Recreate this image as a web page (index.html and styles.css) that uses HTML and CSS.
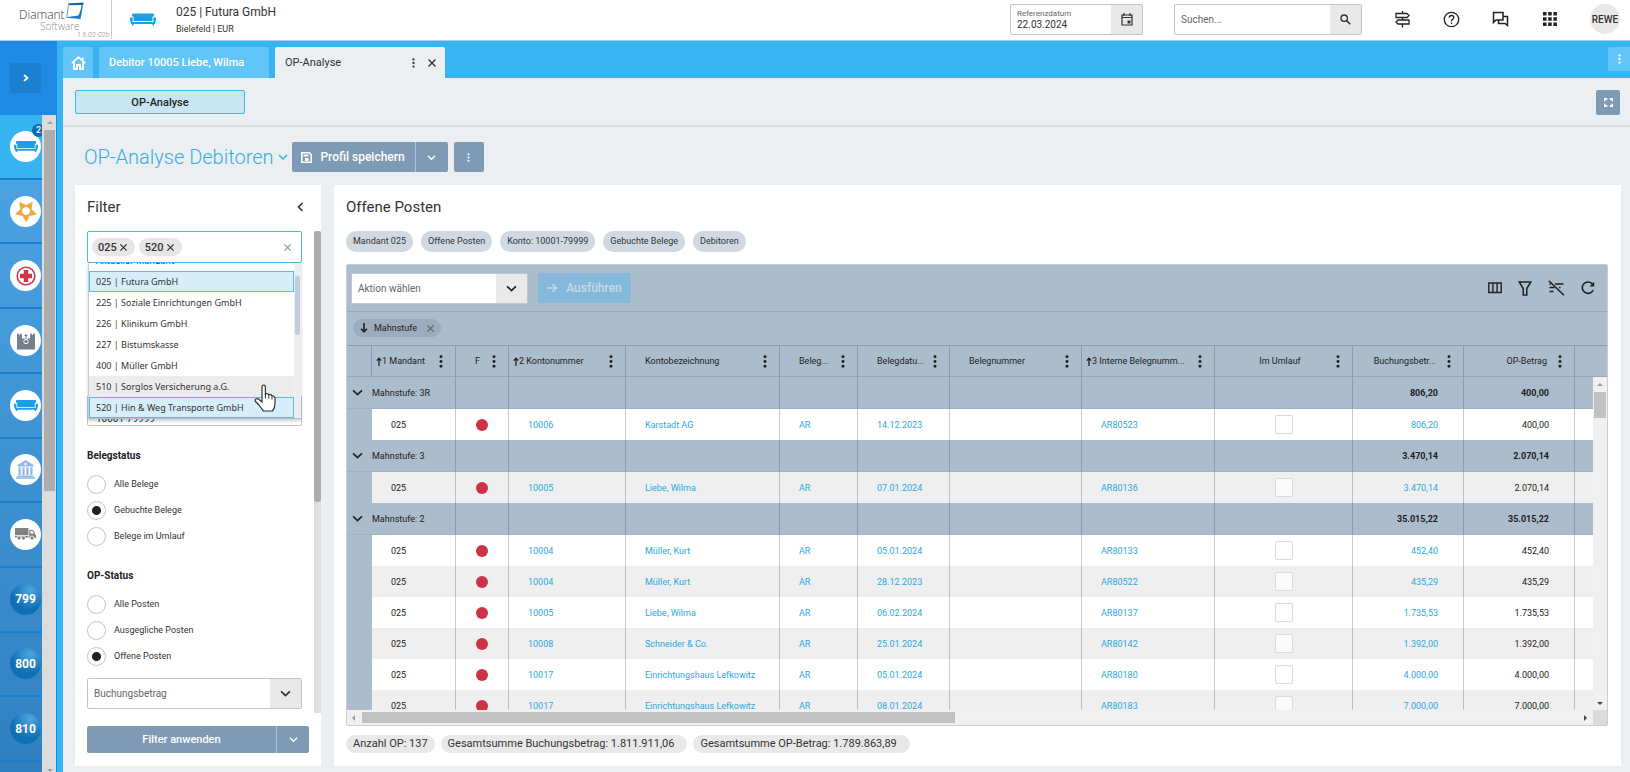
FILE: index.html
```html
<!DOCTYPE html>
<html lang="de">
<head>
<meta charset="utf-8">
<title>OP-Analyse Debitoren</title>
<link rel="stylesheet" href="styles.css">
</head>
<body>
<svg class="defs" aria-hidden="true">
  <symbol id="sofa" viewBox="0 0 26 13"><path d="M3 0.500H23Q24 .5 24 2V3.500H22.500V8H3.500V3.500H2V2Q2 .5 3 .5Z"/><path d="M0 4.500H2.600V9H23.400V4.500H26V7L24.800 11H24V12.500H22.500V11H3.500V12.500H2V11H1.200L0 7Z"/></symbol>
  <symbol id="dots" viewBox="0 0 6 14"><circle cx="3" cy="2" r="1.600"/><circle cx="3" cy="7" r="1.600"/><circle cx="3" cy="12" r="1.600"/></symbol>
  <symbol id="down" viewBox="0 0 10 10"><path d="M1 3L5 7L9 3" fill="none" stroke="currentColor" stroke-width="1.500"/></symbol>
  <symbol id="x" viewBox="0 0 10 10"><path d="M1.500 1.500L8.500 8.500M8.500 1.500L1.500 8.500" fill="none" stroke="currentColor" stroke-width="1.400"/></symbol>
  <symbol id="up" viewBox="0 0 6 9"><path d="M3 9V1.500M.8 3.600L3 1.200L5.200 3.600" fill="none" stroke="currentColor" stroke-width="1.300"/></symbol>
</svg>

<header class="top">
  <div class="logo">
    <svg width="111" height="40" role="img" aria-label="Diamant Software">
      <text x="19" y="20" class="logo-a">Diamant</text>
      <text x="40" y="31" class="logo-b">Software</text>
      <path d="M68.500 5L82 4.500L80.500 17L66.800 18.500Z" fill="#fff" stroke="#5ba3d8" stroke-width="1"/>
      <path d="M83.500 3.500L80.500 20L66 18.800L78.500 16.500Z" fill="#1c79c4"/>
      <path d="M68 4.500L83.500 3.500L83 6L70 6.200Z" fill="#1565a9"/>
      <text x="77" y="38" class="logo-c">1.6.02-02b</text>
    </svg>
  </div>
  <svg class="firm-icon"><use href="#sofa"/></svg>
  <div class="firm">
    <div class="firm-name">025 | Futura GmbH</div>
    <div class="firm-place">Bielefeld | EUR</div>
  </div>
  <div class="box date-box">
    <div class="date-text"><label for="ref">Referenzdatum</label><input id="ref" value="22.03.2024"></div>
    <button class="box-btn" aria-label="Kalender"><svg width="12" height="13" viewBox="0 0 12 13"><path d="M1 2H11V12H1ZM1 4.500H11M3 0V3M9 0V3" fill="none" stroke="currentColor" stroke-width="1.200"/><path d="M6.500 7.500H9.500V10.500H6.500Z"/></svg></button>
  </div>
  <div class="box search-box">
    <input class="field-text" placeholder="Suchen..." aria-label="Suchen">
    <button class="box-btn" aria-label="Suche starten"><svg width="11" height="11" viewBox="0 0 11 11"><circle cx="4.200" cy="4.200" r="3.200" fill="none" stroke="currentColor" stroke-width="1.300"/><path d="M6.500 6.500L10.200 10.200" stroke="currentColor" stroke-width="1.600"/></svg></button>
  </div>
  <nav class="tools">
    <button aria-label="Wegweiser"><svg width="17" height="17" viewBox="0 0 17 17" fill="none" stroke="currentColor" stroke-width="1.300"><path d="M2 2.500H13L15 4.500L13 6.500H2ZM15 9H4L2 11L4 13H15ZM8.500 0V2.500M8.500 6.500V9M8.500 13V16.500"/></svg></button>
    <button aria-label="Hilfe"><svg width="17" height="17" viewBox="0 0 17 17" fill="none" stroke="currentColor" stroke-width="1.300"><circle cx="8.500" cy="8.500" r="7.200"/><path d="M6.200 6.800Q6.300 4.500 8.500 4.500T10.800 6.600Q10.800 7.600 9.600 8.400T8.500 10.200M8.500 11.500V13"/></svg></button>
    <button aria-label="Nachrichten"><svg width="17" height="17" viewBox="0 0 17 17" fill="none" stroke="currentColor" stroke-width="1.500"><path d="M1.500 11.500V1.500H11V9H4ZM11 5.500H15.500V14.500L13 12.500H6.500V9"/></svg></button>
    <button aria-label="Apps"><svg width="14" height="14" viewBox="0 0 14 14"><path d="M0 0h3.500v3.500H0zM5.200 0h3.500v3.500H5.200zM10.400 0h3.500v3.500h-3.500zM0 5.200h3.500v3.500H0zM5.200 5.200h3.500v3.500H5.200zM10.400 5.200h3.500v3.500h-3.500zM0 10.400h3.500v3.500H0zM5.200 10.400h3.500v3.500H5.200zM10.400 10.400h3.500v3.500h-3.500z"/></svg></button>
  </nav>
  <button class="avatar">REWE</button>
</header>

<div class="frame">
  <aside class="rail">
    <div class="rail-top"><button class="expand" aria-label="Ausklappen"><svg width="6" height="8" viewBox="0 0 6 8"><path d="M1 1L4.500 4L1 7" fill="none" stroke="currentColor" stroke-width="1.700"/></svg></button></div>
    <div class="rail-body">
      <div class="rail-list">
        <a href="#" class="item active"><span class="disc sofa"><svg width="24" height="13"><use href="#sofa"/></svg></span><span class="badge">2</span></a>
        <a href="#" class="item"><span class="disc"><svg width="26" height="26" viewBox="0 0 26 26" fill="#f2a737"><g id="ray"><path d="M13 24.500L10.800 20L11 17H15L15.200 20Z"/><path d="M8.800 15.500L12 17H14L17.200 15.500L15.200 20.500H10.800Z"/></g><use href="#ray" transform="rotate(72 13 13)"/><use href="#ray" transform="rotate(144 13 13)"/><use href="#ray" transform="rotate(216 13 13)"/><use href="#ray" transform="rotate(288 13 13)"/></svg></span></a>
        <a href="#" class="item"><span class="disc"><svg width="20" height="20" viewBox="0 0 20 20"><circle cx="10" cy="10" r="8.800" fill="none" stroke="#cf3447" stroke-width="1.600"/><path d="M7.800 4H12.200V7.800H16V12.200H12.200V16H7.800V12.200H4V7.800H7.800Z" fill="#cf3447"/></svg></span></a>
        <a href="#" class="item"><span class="disc"><svg width="18" height="19" viewBox="0 0 18 19"><path d="M0 18.500V4L1 1.500L2 4H3L4 1.500L5 4V7.500H13V4L14 1.500L15 4H16L17 1.500L18 4V18.500Z" fill="#75808c"/><circle cx="9" cy="10.500" r="2.200" fill="#75808c" stroke="#fff" stroke-width="1"/><path d="M9 3V7M7.500 4.500H10.500" stroke="#75808c"/></svg></span></a>
        <a href="#" class="item"><span class="disc sofa"><svg width="24" height="13"><use href="#sofa"/></svg></span></a>
        <a href="#" class="item"><span class="disc"><svg width="19" height="19" viewBox="0 0 19 19" fill="#8fb9e6"><path fill-rule="evenodd" d="M9.500 0L17.500 5V6.500H1.500V5ZM9.500 2.800A1.200 1.200 0 1 0 9.500 5.200A1.200 1.200 0 1 0 9.500 2.800Z"/><path d="M2.500 7.300H4.700V15H2.500ZM6.400 7.300H8.600V15H6.400ZM10.400 7.300H12.600V15H10.400ZM14.300 7.300H16.500V15H14.300ZM1.500 15.600H17.500V17H1.500ZM0 17.300H19V18.800H0Z"/></svg></span></a>
        <a href="#" class="item"><span class="disc"><svg width="21" height="13" viewBox="0 0 21 13" fill="#808080"><path d="M0 0H13.500V7H0ZM0 7.800H13.500V9.500H0ZM14.300 2H18L20 5V6L21 7V10H14.300Z"/><path d="M15.500 3H17.500L18.800 5.500H15.500Z" fill="#fff"/><g stroke="#fff" stroke-width=".8"><circle cx="4" cy="10" r="2"/><circle cx="8.500" cy="10" r="2"/><circle cx="17" cy="10" r="2"/></g></svg></span></a>
        <a href="#" class="item"><span class="disc num">799</span></a>
        <a href="#" class="item"><span class="disc num">800</span></a>
        <a href="#" class="item"><span class="disc num">810</span></a>
        <div class="item-rest"></div>
      </div>
      <div class="rail-scroll"><i class="tri up"></i><div class="rail-thumb"></div><i class="tri down pale"></i></div>
    </div>
  </aside>

  <main class="work">
    <div class="tabs">
      <button class="tab home" aria-label="Startseite"><svg width="15" height="14" viewBox="0 0 15 14" fill="none" stroke="currentColor" stroke-width="1.800"><path d="M.8 7.200L7.500 1.200L14.200 7.200M3 6V13H6V9H9V13H12V6M11.800 1.500V4"/></svg></button>
      <button class="tab wide">Debitor 10005 Liebe, Wilma</button>
      <div class="tab current"><a href="#">OP-Analyse</a><button aria-label="Optionen"><svg width="5" height="10"><use href="#dots"/></svg></button><button aria-label="Schließen"><svg width="10" height="10"><use href="#x"/></svg></button></div>
      <button class="tab more" aria-label="Weitere Tabs"><svg width="5" height="10"><use href="#dots"/></svg></button>
    </div>
    <div class="subnav">
      <button class="sub">OP-Analyse</button>
      <button class="full" aria-label="Vollbild"><svg width="9" height="9" viewBox="0 0 9 9" fill="none" stroke="currentColor" stroke-width="1.700"><path d="M.8 3.300V.8H3.300M5.700 .8H8.200V3.300M8.200 5.700V8.200H5.700M3.300 8.200H.8V5.700"/></svg></button>
    </div>
    <div class="title-row">
      <h1>OP-Analyse Debitoren</h1>
      <button class="title-arrow" aria-label="Profil wählen"><svg width="10" height="10"><use href="#down"/></svg></button>
      <button class="btn save"><svg width="11" height="11" viewBox="0 0 11 11"><path d="M.8 .8H8.200L10.200 2.800V10.200H.8Z" fill="none" stroke="currentColor" stroke-width="1.500"/><path d="M2.500 2.500H7.500V4.500H2.500ZM4 6H7.500V9H4Z"/></svg>Profil speichern</button>
      <button class="btn split" aria-label="Mehr"><svg width="9" height="9"><use href="#down"/></svg></button>
      <button class="btn kebab" aria-label="Optionen"><svg width="5" height="9"><use href="#dots"/></svg></button>
    </div>

    <div class="panels">
      <section class="panel filter">
        <div class="filter-head"><h2>Filter</h2><button aria-label="Einklappen"><svg width="7" height="10" viewBox="0 0 7 10"><path d="M5.500 1L1.500 5L5.500 9" fill="none" stroke="currentColor" stroke-width="1.600"/></svg></button></div>
        <div class="filter-body">
          <div class="fields">
            <div class="multi">
              <span class="tag">025<button aria-label="025 entfernen"><svg width="9" height="9"><use href="#x"/></svg></button></span>
              <span class="tag">520<button aria-label="520 entfernen"><svg width="9" height="9"><use href="#x"/></svg></button></span>
              <input aria-label="Mandant">
              <button class="clear" aria-label="Leeren"><svg width="9" height="9"><use href="#x"/></svg></button>
              <div class="drop">
                <ul role="listbox" aria-label="Mandanten">
                  <li role="option">Aktueller Mandant</li>
                  <li role="option" class="sel">025 | Futura GmbH</li>
                  <li role="option">225 | Soziale Einrichtungen GmbH</li>
                  <li role="option">226 | Klinikum GmbH</li>
                  <li role="option">227 | Bistumskasse</li>
                  <li role="option">400 | Müller GmbH</li>
                  <li role="option" class="hover">510 | Sorglos Versicherung a.G.</li>
                  <li role="option" class="sel">520 | Hin &amp; Weg Transporte GmbH</li>
                </ul>
                <div class="drop-scroll"><div></div></div>
              </div>
              <svg class="hand" width="22" height="29" viewBox="0 0 22 29"><path d="M8 16V3.200Q8 1 9.700 1T11.400 3.200V10Q13.800 8.800 14.800 10.800Q17 9.800 18 12Q20.500 11.500 21 14.500V19Q21 24 18.500 27H9.500Q7 24 5 21L1.500 17.500Q.5 16 2 15T5 15.500L8 18Z" fill="#fff" stroke="#333" stroke-width="1.200"/><path d="M11.400 10V14.500M14.800 11V14.500M18 12.500V15.500" stroke="#333" stroke-width="1"/></svg>
            </div>
            <input class="range" value="10001-79999" aria-label="Konto">
            <h3>Belegstatus</h3>
            <label class="radio"><input type="radio" name="beleg">Alle Belege</label>
            <label class="radio"><input type="radio" name="beleg" checked>Gebuchte Belege</label>
            <label class="radio"><input type="radio" name="beleg">Belege im Umlauf</label>
            <h3>OP-Status</h3>
            <label class="radio"><input type="radio" name="op">Alle Posten</label>
            <label class="radio"><input type="radio" name="op">Ausgegliche Posten</label>
            <label class="radio"><input type="radio" name="op" checked>Offene Posten</label>
            <div class="box select amount"><select aria-label="Buchungsbetrag"><option>Buchungsbetrag</option></select><span class="box-btn"><svg width="11" height="11"><use href="#down"/></svg></span></div>
          </div>
          <div class="filter-scroll"><div></div></div>
        </div>
        <div class="apply"><button class="btn go">Filter anwenden</button><button class="btn split" aria-label="Mehr"><svg width="9" height="9"><use href="#down"/></svg></button></div>
      </section>

      <section class="panel posts">
        <h2>Offene Posten</h2>
        <div class="chips"><span>Mandant 025</span><span>Offene Posten</span><span>Konto: 10001-79999</span><span>Gebuchte Belege</span><span>Debitoren</span></div>
        <div class="grid">
          <div class="bar">
            <div class="box select action"><select aria-label="Aktion wählen"><option>Aktion wählen</option></select><span class="box-btn"><svg width="11" height="11"><use href="#down"/></svg></span></div>
            <button class="run" disabled><svg width="11" height="10" viewBox="0 0 11 10"><path d="M0 5H9.500M5.500 1L9.500 5L5.500 9" fill="none" stroke="currentColor" stroke-width="1.500"/></svg>Ausführen</button>
            <div class="bar-icons">
              <button aria-label="Spalten"><svg width="14" height="12" viewBox="0 0 14 12" fill="none" stroke="currentColor" stroke-width="1.400"><path d="M.8 1H13.200V10.500H.8ZM4.900 1V10.500M9.100 1V10.500"/></svg></button>
              <button aria-label="Filter"><svg width="14" height="15" viewBox="0 0 14 15" fill="none" stroke="currentColor" stroke-width="1.500"><path d="M1.200 1H12.800L8.800 7.500V14H5.200V7.500Z"/></svg></button>
              <button aria-label="Filter löschen"><svg width="17" height="16" viewBox="0 0 17 16" fill="none" stroke="currentColor" stroke-width="1.500"><path d="M.8 .8L16 15.200M7 4H15.500M1.500 4H3M1.500 7.500H6.500M11 7.500H12.500M1.500 11.500H5.500"/></svg></button>
              <button aria-label="Aktualisieren"><svg width="14" height="14" viewBox="0 0 14 14" fill="none" stroke="currentColor" stroke-width="1.600"><path d="M12.200 9A5.700 5.700 0 1 1 11.500 3.200"/><path d="M13.200 .8V5.600H8.600Z" fill="currentColor" stroke="none"/></svg></button>
            </div>
          </div>
          <div class="group-bar"><span class="group-chip"><svg width="8" height="10" viewBox="0 0 8 10"><path d="M4 0V8.500M1 5.800L4 8.800L7 5.800" fill="none" stroke="currentColor" stroke-width="1.600"/></svg>Mahnstufe<button aria-label="Gruppierung entfernen"><svg width="9" height="9"><use href="#x"/></svg></button></span></div>
          <div class="table-area">
            <table>
              <colgroup><col class="c0"><col class="c1"><col class="c2"><col class="c3"><col class="c4"><col class="c5"><col class="c6"><col class="c7"><col class="c8"><col class="c9"><col class="c10"><col class="c11"><col></colgroup>
              <thead><tr>
                <th></th>
                <th><div class="th sorted"><svg><use href="#up"/></svg><span>1 Mandant</span><button aria-label="Menü"><svg><use href="#dots"/></svg></button></div></th>
                <th><div class="th"><span>F</span><button aria-label="Menü"><svg><use href="#dots"/></svg></button></div></th>
                <th><div class="th sorted"><svg><use href="#up"/></svg><span>2 Kontonummer</span><button aria-label="Menü"><svg><use href="#dots"/></svg></button></div></th>
                <th><div class="th"><span>Kontobezeichnung</span><button aria-label="Menü"><svg><use href="#dots"/></svg></button></div></th>
                <th><div class="th"><span>Beleg...</span><button aria-label="Menü"><svg><use href="#dots"/></svg></button></div></th>
                <th><div class="th"><span>Belegdatu...</span><button aria-label="Menü"><svg><use href="#dots"/></svg></button></div></th>
                <th><div class="th"><span>Belegnummer</span><button aria-label="Menü"><svg><use href="#dots"/></svg></button></div></th>
                <th><div class="th sorted"><svg><use href="#up"/></svg><span>3 Interne Belegnumm...</span><button aria-label="Menü"><svg><use href="#dots"/></svg></button></div></th>
                <th><div class="th mid"><span>Im Umlauf</span><button aria-label="Menü"><svg><use href="#dots"/></svg></button></div></th>
                <th><div class="th end"><span>Buchungsbetr...</span><button aria-label="Menü"><svg><use href="#dots"/></svg></button></div></th>
                <th><div class="th end"><span>OP-Betrag</span><button aria-label="Menü"><svg><use href="#dots"/></svg></button></div></th>
                <th></th>
              </tr></thead>
              <tbody>
                <tr class="grp"><td><svg><use href="#down"/></svg></td><td>Mahnstufe: 3R</td><td></td><td></td><td></td><td></td><td></td><td></td><td></td><td></td><td>806,20</td><td>400,00</td><td></td></tr>
                <tr><td></td><td>025</td><td><i class="dot"></i></td><td><a href="#">10006</a></td><td><a href="#">Karstadt AG</a></td><td><a href="#">AR</a></td><td><a href="#">14.12.2023</a></td><td></td><td><a href="#">AR80523</a></td><td><input type="checkbox" aria-label="Im Umlauf"></td><td><a href="#">806,20</a></td><td>400,00</td><td></td></tr>
                <tr class="grp"><td><svg><use href="#down"/></svg></td><td>Mahnstufe: 3</td><td></td><td></td><td></td><td></td><td></td><td></td><td></td><td></td><td>3.470,14</td><td>2.070,14</td><td></td></tr>
                <tr class="alt"><td></td><td>025</td><td><i class="dot"></i></td><td><a href="#">10005</a></td><td><a href="#">Liebe, Wilma</a></td><td><a href="#">AR</a></td><td><a href="#">07.01.2024</a></td><td></td><td><a href="#">AR80136</a></td><td><input type="checkbox" aria-label="Im Umlauf"></td><td><a href="#">3.470,14</a></td><td>2.070,14</td><td></td></tr>
                <tr class="grp"><td><svg><use href="#down"/></svg></td><td>Mahnstufe: 2</td><td></td><td></td><td></td><td></td><td></td><td></td><td></td><td></td><td>35.015,22</td><td>35.015,22</td><td></td></tr>
                <tr><td></td><td>025</td><td><i class="dot"></i></td><td><a href="#">10004</a></td><td><a href="#">Müller, Kurt</a></td><td><a href="#">AR</a></td><td><a href="#">05.01.2024</a></td><td></td><td><a href="#">AR80133</a></td><td><input type="checkbox" aria-label="Im Umlauf"></td><td><a href="#">452,40</a></td><td>452,40</td><td></td></tr>
                <tr class="alt"><td></td><td>025</td><td><i class="dot"></i></td><td><a href="#">10004</a></td><td><a href="#">Müller, Kurt</a></td><td><a href="#">AR</a></td><td><a href="#">28.12.2023</a></td><td></td><td><a href="#">AR80522</a></td><td><input type="checkbox" aria-label="Im Umlauf"></td><td><a href="#">435,29</a></td><td>435,29</td><td></td></tr>
                <tr><td></td><td>025</td><td><i class="dot"></i></td><td><a href="#">10005</a></td><td><a href="#">Liebe, Wilma</a></td><td><a href="#">AR</a></td><td><a href="#">06.02.2024</a></td><td></td><td><a href="#">AR80137</a></td><td><input type="checkbox" aria-label="Im Umlauf"></td><td><a href="#">1.735,53</a></td><td>1.735,53</td><td></td></tr>
                <tr class="alt"><td></td><td>025</td><td><i class="dot"></i></td><td><a href="#">10008</a></td><td><a href="#">Schneider &amp; Co.</a></td><td><a href="#">AR</a></td><td><a href="#">25.01.2024</a></td><td></td><td><a href="#">AR80142</a></td><td><input type="checkbox" aria-label="Im Umlauf"></td><td><a href="#">1.392,00</a></td><td>1.392,00</td><td></td></tr>
                <tr><td></td><td>025</td><td><i class="dot"></i></td><td><a href="#">10017</a></td><td><a href="#">Einrichtungshaus Lefkowitz</a></td><td><a href="#">AR</a></td><td><a href="#">05.01.2024</a></td><td></td><td><a href="#">AR80180</a></td><td><input type="checkbox" aria-label="Im Umlauf"></td><td><a href="#">4.000,00</a></td><td>4.000,00</td><td></td></tr>
                <tr class="alt"><td></td><td>025</td><td><i class="dot"></i></td><td><a href="#">10017</a></td><td><a href="#">Einrichtungshaus Lefkowitz</a></td><td><a href="#">AR</a></td><td><a href="#">08.01.2024</a></td><td></td><td><a href="#">AR80183</a></td><td><input type="checkbox" aria-label="Im Umlauf"></td><td><a href="#">7.000,00</a></td><td>7.000,00</td><td></td></tr>
              </tbody>
            </table>
            <div class="vscroll"><i class="tri up"></i><div></div><i class="tri down"></i></div>
          </div>
          <div class="hscroll"><i class="tri left"></i><div class="track"><div></div></div><i class="tri right"></i><span></span></div>
        </div>
        <div class="sums"><span>Anzahl OP: 137</span><span class="long">Gesamtsumme Buchungsbetrag: 1.811.911,06</span><span class="long">Gesamtsumme OP-Betrag: 1.789.863,89</span></div>
      </section>
    </div>
  </main>
</div>
</body>
</html>
```
FILE: styles.css
```css
* { box-sizing: border-box; }
body { margin: 0; height: 100vh; display: flex; flex-direction: column; overflow: hidden; background: #ebeff2; color: #333; font-family: Roboto, "Liberation Sans", sans-serif; font-size: 9px; }
button, input, select { font: inherit; color: inherit; border: 0; padding: 0; margin: 0; background: none; border-radius: 0; }
button { display: flex; align-items: center; justify-content: center; flex: none; }
input { min-width: 0; }
a { color: inherit; text-decoration: none; }
svg { display: block; flex: none; }
svg:not([fill]) { fill: currentColor; }
h1, h2, h3 { margin: 0; font-weight: 400; }
.defs { position: absolute; width: 0; height: 0; }

/* header */
.top { display: flex; flex: none; align-items: center; height: 41px; padding: 0 10px 2px 0; background: #fff; border-bottom: 1px solid #9fd3f0; }
.logo { width: 112px; height: 40px; border-right: 1px solid #ccc; }
.logo-a { font: 300 12px "Open Sans", sans-serif; fill: #333; }
.logo-b { font: 300 10px "Open Sans", sans-serif; fill: #888; }
.logo-c { font: 300 7px Roboto, sans-serif; fill: #888; }
.firm-icon { width: 26px; height: 13px; margin: 0 20px 0 18px; color: #1ba0e8; }
.firm { flex: 1; padding-top: 2px; }
.firm-name { font-size: 12px; line-height: 18px; }
.firm-place { font-size: 9px; line-height: 16px; }
.box { display: flex; height: 31px; background: #fff; border: 1px solid #c4c4c4; border-radius: 2px; }
.box-btn { display: flex; align-items: center; justify-content: center; width: 31px; background: #e9e9e9; }
.date-box { width: 133px; margin-right: 31px; }
.date-text { flex: 1; display: flex; flex-direction: column; padding: 4px 0 0 6px; }
.date-text label { font-size: 8px; line-height: 10px; color: #666; }
.date-text input { width: 90px; font-size: 10px; line-height: 12px; }
.search-box { width: 188px; }
.field-text { flex: 1; padding-left: 6px; font-size: 10px; }
::placeholder { color: #666; }
.tools { display: flex; padding: 0 16px; color: #222; }
.tools button { width: 49px; }
.avatar { width: 30px; height: 30px; border-radius: 50%; background: #e9e9e9; font-size: 10px; font-weight: 500; }

/* left rail */
.frame { flex: 1; display: flex; min-height: 0; }
.rail { width: 57px; display: flex; flex-direction: column; background: #1e8ae4; }
.rail-top { height: 74px; padding: 22px 10px; }
.expand { width: 31px; height: 30px; background: #1b80d2; color: #fff; border-radius: 2px; }
.rail-body { flex: 1; display: flex; min-height: 0; }
.rail-list { width: 42px; display: flex; flex-direction: column; overflow: hidden; background: linear-gradient(#4ea6e6, #3080bf); }
.item { flex: 1; position: relative; display: flex; align-items: center; padding: 0 0 0 10px; border-bottom: 2px solid #1a7fce; }
.item.active { background: #36b3f1; }
.item-rest { height: 10px; }
.disc { flex: none; width: 31px; height: 31px; border-radius: 50%; background: #fff; display: flex; align-items: center; justify-content: center; }
.disc.sofa { color: #1ba0e8; }
.disc.num { background: radial-gradient(circle at 65% 20%, #4fa6dc, #0f6fb5 60%); color: #fff; font-size: 12px; font-weight: 700; }
.badge { position: absolute; left: 32px; top: 9px; width: 13px; height: 13px; border-radius: 50%; background: #0e6ab5; color: #fff; line-height: 13px; text-align: center; font-weight: 500; }
.rail-scroll { width: 14px; background: #dcdcdc; padding: 6px 1px 0 2px; display: flex; flex-direction: column; }
.rail-thumb { margin: 6px 0 auto; height: 361px; background: #adadad; }
.tri { align-self: center; width: 0; height: 0; border: 3px solid transparent; }
.tri.up { border-bottom-color: #a0a0a0; border-top-width: 0; }
.tri.down { border-top-color: #444; border-bottom-width: 0; }
.tri.pale { border-top-color: #a0a0a0; }
.tri.left { border-right-color: #999; border-left-width: 0; }
.tri.right { border-left-color: #444; border-right-width: 0; }

/* tabs */
.work { flex: 1; min-width: 0; display: flex; flex-direction: column; border-left: 6px solid #38b4f2; }
.tabs { flex: none; height: 37px; padding-top: 6px; display: flex; gap: 6px; background: #38b4f2; }
.tab { height: 31px; background: #61c5f7; color: #fff; border-radius: 2px 2px 0 0; font-size: 11px; font-weight: 500; }
.tab.home { width: 30px; }
.tab.wide { width: 170px; justify-content: flex-start; padding-left: 10px; }
.tab.current { width: 170px; display: flex; align-items: center; gap: 11px; padding: 0 8px 0 10px; background: #ebeff2; color: #333; font-weight: 400; }
.tab.current a { flex: 1; }
.tab.more { width: 22px; height: 24px; margin-left: auto; border-radius: 2px 0 0 2px; }
.subnav { flex: none; height: 49px; padding: 12px 10px 0 12px; display: flex; justify-content: space-between; border-bottom: 2px solid #d9dde0; }
.sub { width: 170px; height: 24px; background: #c8e5f3; border: 1px solid #45b2e8; border-radius: 2px; font-size: 11px; font-weight: 500; color: #222; }
.full { width: 24px; height: 25px; background: #7f9ab5; color: #fff; border-radius: 2px; }
.title-row { flex: none; height: 58px; display: flex; align-items: center; padding: 2px 0 0 21px; }
h1 { font-size: 20px; font-weight: 300; color: #35aee8; }
.title-arrow { width: 18px; color: #35aee8; }
.btn { height: 30px; background: #7f9ab5; color: #fff; border-radius: 2px; font-size: 12px; font-weight: 500; gap: 8px; }
.save { width: 123px; border-radius: 2px 0 0 2px; }
.split { width: 33px; border-left: 1px solid #b5c4d3; border-radius: 0 2px 2px 0; }
.kebab { width: 30px; margin-left: 6px; }

/* panels */
.panels { flex: 1; min-height: 0; display: flex; gap: 13px; padding: 0 9px 6px 12px; }
.panel { background: #fff; display: flex; flex-direction: column; min-height: 0; }
h2 { font-size: 15px; line-height: 20px; }
.filter { width: 246px; flex: none; }
.filter-head { flex: none; height: 46px; display: flex; justify-content: space-between; padding: 12px 17px 0 12px; align-items: flex-start; }
.filter-head button { height: 20px; }
.filter-body { flex: 1; min-height: 0; display: flex; justify-content: space-between; }
.fields { width: 227px; padding-left: 12px; }
.multi { position: relative; width: 215px; height: 32px; display: flex; align-items: center; gap: 4px; padding: 0 9px 0 4px; border: 1px solid #4eb6e8; border-radius: 2px; }
.tag { display: flex; align-items: center; gap: 2px; height: 18px; padding: 0 7px 0 6px; border-radius: 9px; background: #e6e6e6; font-size: 11px; font-weight: 500; }
.multi input { flex: 1; }
.clear { color: #999; }
.drop { position: absolute; left: 0; right: 0; top: 31px; height: 156px; display: flex; background: #fff; border-bottom: 1px solid #bbb; border-left: 1px solid #ccc; box-shadow: 0 2px 3px rgba(0,0,0,.2); overflow: hidden; }
.drop ul { flex: 1; margin: 0; padding: 0; list-style: none; display: flex; flex-direction: column; justify-content: flex-end; font: 9px "Noto Sans", sans-serif; }
.drop li { flex: none; height: 21px; line-height: 19px; padding-left: 6px; border: 1px solid transparent; }
.drop li.sel { background: #d5eefa; border-color: #5abbe9; }
.drop li.hover { background: #ececec; }
.drop-scroll { width: 7px; background: #eceff2; padding: 13px 1px 0; }
.drop-scroll div { height: 59px; background: #c0cddb; border-radius: 2px; }
.hand { position: absolute; left: 166px; top: 152px; }
.range { display: block; width: 215px; height: 31px; margin: 132px 0 21px; padding: 15px 8px 0; border: 1px solid #c4c4c4; border-radius: 2px; font-size: 10px; }
h3 { font-size: 10px; font-weight: 700; line-height: 16px; margin: 18px 0 7px; padding-top: 1px; color: #222; }
.radio { display: flex; align-items: center; gap: 8px; height: 26px; }
.radio input { appearance: none; width: 19px; height: 19px; border: 1px solid #c4c4c4; border-radius: 50%; background: #fff; }
.radio input:checked { background: radial-gradient(circle, #222 4px, #fff 5px); }
.select { overflow: hidden; position: relative; }
.select select { appearance: none; flex: 1; min-width: 0; padding-left: 6px; font-size: 10px; color: #666; }
.amount { width: 215px; margin-top: 9px; }
.filter-scroll { width: 7px; background: #dedede; }
.filter-scroll div { height: 271px; background: #adadad; border-radius: 3px; }
.apply { flex: none; display: flex; padding: 13px 12px; }
.apply .btn { height: 27px; font-size: 11px; }
.go { flex: 1; border-radius: 2px 0 0 2px; }

.posts { flex: 1; min-width: 0; padding: 12px 13px 13px 12px; }
.chips { display: flex; gap: 8px; margin: 14px 0 12px; }
.chips span { height: 21px; line-height: 20px; padding: 0 7px; border-radius: 10px; background: #d0d9e2; }
.grid { flex: 1; min-height: 0; display: flex; flex-direction: column; background: #abbccd; border: 1px solid #c6cdd4; border-radius: 2px; color: #222; }
.bar { flex: none; height: 47px; display: flex; align-items: center; padding: 0 12px 0 4px; border-bottom: 1px solid #97a9bc; }
.action { width: 177px; margin-right: 10px; }
.run { width: 93px; height: 30px; gap: 8px; background: #85b9db; color: #c5d8e7; font-size: 12px; font-weight: 500; border-radius: 2px; }
.bar-icons { display: flex; margin-left: auto; gap: 16px; }
.group-bar { flex: none; height: 34px; padding: 7px 6px; border-bottom: 1px solid #8b9daf; }
.group-chip { display: inline-flex; align-items: center; gap: 6px; height: 18px; width: 88px; padding-left: 7px; border-radius: 9px; background: #9aacbe; font-size: 9px; }
.group-chip button { margin-left: 3px; color: #666; }
.table-area { flex: 1; min-height: 0; position: relative; overflow: hidden; }
table { width: 100%; table-layout: fixed; border-collapse: separate; border-spacing: 0; font-size: 9px; }
.c0 { width: 25px; } .c1 { width: 84px; } .c2 { width: 53px; } .c3 { width: 117px; } .c4 { width: 154px; } .c5 { width: 78px; } .c6 { width: 92px; } .c7 { width: 132px; } .c8 { width: 133px; } .c9 { width: 138px; } .c10 { width: 111px; } .c11 { width: 111px; }
th { height: 31px; padding: 0; border-right: 1px solid #8a9caf; border-bottom: 1px solid #95a7ba; font-weight: 400; text-align: left; }
.th { display: flex; align-items: center; padding: 0 11px 0 19px; }
.th span { flex: 1; white-space: nowrap; }
.th > svg { width: 6px; height: 9px; }
.th.sorted { padding-left: 4px; }
.th button svg { width: 6px; height: 13px; }
.th.mid { padding-left: 10px; }
.th.mid span { text-align: center; }
.th.end span { text-align: right; padding-right: 10px; }
.th.end { padding-left: 0; }
td { height: 31px; padding: 0 0 0 19px; border-right: 1px solid rgba(0,0,0,.2); background: #fff; white-space: nowrap; }
.alt td { background: #efefef; }
td a { color: #2ba8e6; }
td:first-child, .grp td:first-child { background: #abbccd; border-right-color: transparent; padding-left: 5px; }
td:first-child svg { width: 11px; height: 11px; }
.grp td { height: 32px; background: #abbccd; border-right-color: #8a9caf; border-bottom: 1px solid #a0b2c4; }
.grp td:nth-child(2) { padding-left: 0; }
td:nth-child(3), td:nth-child(10) { text-align: center; padding: 0; }
td:nth-child(11), td:nth-child(12) { text-align: right; padding: 0 25px 0 0; }
.grp td:nth-child(11), .grp td:nth-child(12) { font-weight: 700; }
th:last-child, td:last-child { border-right: 0; }
.dot { display: inline-block; vertical-align: middle; width: 12px; height: 12px; border-radius: 50%; background: #cc3346; }
td input { appearance: none; display: inline-block; vertical-align: middle; width: 18px; height: 19px; border: 1px solid #dcdcdc; border-radius: 2px; background: rgba(255,255,255,.7); }
.vscroll { position: absolute; right: 0; top: 31px; bottom: 0; width: 14px; background: #f0f0f0; padding: 6px 1px 5px; display: flex; flex-direction: column; }
.vscroll div { height: 26px; margin: 6px 0 auto; background: #c1c1c1; }
.hscroll { flex: none; height: 15px; display: flex; align-items: center; background: #f0f0f0; padding-left: 5px; }
.hscroll .track { flex: 1; margin: 0 4px 0 7px; }
.track div { width: calc(49% - 4px); height: 11px; background: #c1c1c1; }
.hscroll span { width: 14px; height: 15px; margin-left: 6px; background: #dcdcdc; }
.sums { flex: none; display: flex; gap: 6px; margin-top: 9px; }
.sums span { height: 18px; line-height: 18px; padding: 0 7px; border-radius: 9px; background: #e9e9e9; font-size: 11px; }
.sums .long { padding-right: 13px; }
```
